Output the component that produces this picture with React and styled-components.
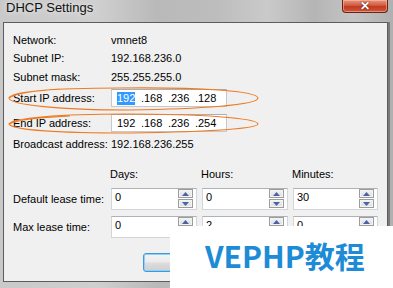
import styled, { createGlobalStyle } from "styled-components";

const GlobalStyle = createGlobalStyle`
  body {
    margin: 0;
    background: #ffffff;
  }
`;

const font = `"Liberation Sans", Arial, sans-serif`;

const Window = styled.div`
  position: relative;
  width: 393px;
  height: 288px;
  overflow: hidden;
  display: flex;
  flex-direction: column;
  font-family: ${font};
  background: linear-gradient(
    90deg,
    #c9c9c9 0%,
    #cfcfcf 25%,
    #b9b9b9 40%,
    #bdbdbd 55%,
    #cacaca 68%,
    #b5b5b5 80%,
    #c4c4c4 90%,
    #b0b0b0 100%
  );
`;

const TitleBar = styled.div`
  height: 22px;
  flex: none;
  display: flex;
  justify-content: space-between;
  align-items: flex-start;
  padding-left: 6px;
`;

const Title = styled.span`
  font-size: 13px;
  line-height: 16px;
  color: #111;
  text-shadow: 0 0 6px rgba(255, 255, 255, 0.9);
`;

const CloseButton = styled.div`
  width: 46px;
  height: 13px;
  margin-right: 5px;
  box-sizing: border-box;
  border: 1px solid #6b2316;
  border-top: none;
  border-radius: 0 0 4px 4px;
  background: linear-gradient(180deg, #e89880 0%, #d4593f 45%, #c03a20 55%, #cf5a3c 100%);
  box-shadow: inset 0 0 0 1px rgba(255, 200, 180, 0.5);
  display: flex;
  justify-content: center;
  align-items: flex-end;
  color: #fff;
  font-size: 12px;
  font-weight: bold;
  line-height: 11px;
  text-shadow: 0 0 2px #3a0a00;
`;

const Client = styled.div`
  flex: 1;
  margin: 0 5px 6px 3px;
  background: #f0f0f0;
  border: 1px solid #5d5d5d;
  box-shadow: 2px 0 0 #7a7a7a;
  padding: 8px 0 0 9px;
  display: flex;
  flex-direction: column;
  font-size: 11px;
  color: #000;
`;

const InfoRow = styled.div`
  display: grid;
  grid-template-columns: 98px 1fr;
  align-items: center;
  height: ${({ $h }) => $h}px;
  margin-top: ${({ $gap }) => $gap || 0}px;
`;

const IpBox = styled.div`
  width: 116px;
  height: 18px;
  box-sizing: border-box;
  border: 1px solid #c5c8cd;
  border-top-color: #a9adb4;
  background: #fff;
  display: flex;
  align-items: center;
  padding-left: 5px;
`;

const Octet = styled.span`
  display: inline-block;
  width: 18px;
  line-height: 13px;
  text-align: center;
  margin-right: 6px;
  background: ${({ $selected }) => ($selected ? "#3399ff" : "transparent")};
  color: ${({ $selected }) => ($selected ? "#fff" : "#000")};
`;

const Dot = styled.span`
  display: inline-block;
  width: 3px;
`;

const LeaseGrid = styled.div`
  display: grid;
  grid-template-columns: 93px 86px 86px 85px;
  column-gap: 5px;
  row-gap: 6px;
  grid-template-rows: 16px 22px 22px;
  margin-top: 13px;
  align-items: center;
`;

const ColHead = styled.span`
  margin-left: -1px;
`;

const SpinBox = styled.div`
  height: 22px;
  box-sizing: border-box;
  border: 1px solid #d2d5da;
  border-top-color: #aeb2b8;
  background: #fff;
  display: flex;
  justify-content: space-between;
  padding: 0 3px 0 3px;
`;

const SpinValue = styled.span`
  line-height: 14px;
  padding-top: 1px;
`;

const SpinButtons = styled.div`
  display: flex;
  flex-direction: column;
  gap: 1px;
`;

const SpinButton = styled.div`
  width: 15px;
  height: 9px;
  box-sizing: border-box;
  border: 1px solid #9c9c9c;
  box-shadow: inset 0 0 0 1px #f4f4f4;
  background: linear-gradient(180deg, #f3f3f3, #dedede);
  display: flex;
  align-items: center;
  justify-content: center;
`;

const Arrow = ({ down }) => (
  <svg width="7" height="4" viewBox="0 0 7 4">
    <path d={down ? "M0 0 L7 0 L3.5 4 Z" : "M0 4 L7 4 L3.5 0 Z"} fill="#4a63a6" />
  </svg>
);

const Footer = styled.div`
  display: flex;
  margin-top: 15px;
  padding-left: 130px;
`;

const DialogButton = styled.div`
  width: 75px;
  height: 19px;
  box-sizing: border-box;
  border: 1px solid #3c9ae0;
  border-radius: 3px;
  box-shadow: inset 0 0 0 1px #8fd0f5;
  background: linear-gradient(180deg, #f4f4f4 0%, #ebebeb 48%, #dddddd 52%, #cfcfcf 100%);
`;

const Watermark = styled.div`
  position: absolute;
  left: 170px;
  top: 226px;
  right: 0;
  bottom: 0;
  background: #fff;
  padding: 14px 0 0 35px;
  box-sizing: border-box;
  font-family: "Noto Sans CJK SC", "Noto Sans", sans-serif;
  font-weight: bold;
  font-size: 30px;
  line-height: 30px;
  color: #1d8bd6;
`;

const Marks = styled.svg`
  position: absolute;
  left: 0;
  top: 0;
  pointer-events: none;
`;

const Spin = ({ value, showDown = true }) => (
  <SpinBox>
    <SpinValue>{value}</SpinValue>
    <SpinButtons>
      <SpinButton>
        <Arrow />
      </SpinButton>
      {showDown && (
        <SpinButton>
          <Arrow down />
        </SpinButton>
      )}
    </SpinButtons>
  </SpinBox>
);

const Ip = ({ octets, selectFirst }) => (
  <IpBox>
    {octets.map((o, i) => (
      <span key={i}>
        {i > 0 && <Dot>.</Dot>}
        <Octet $selected={selectFirst && i === 0}>{o}</Octet>
      </span>
    ))}
  </IpBox>
);

export default function App() {
  return (
    <Window>
      <GlobalStyle />
      <TitleBar>
        <Title>DHCP Settings</Title>
        <CloseButton>✕</CloseButton>
      </TitleBar>
      <Client>
        <InfoRow $h={18}>
          <span>Network:</span>
          <span>vmnet8</span>
        </InfoRow>
        <InfoRow $h={18}>
          <span>Subnet IP:</span>
          <span>192.168.236.0</span>
        </InfoRow>
        <InfoRow $h={19}>
          <span>Subnet mask:</span>
          <span>255.255.255.0</span>
        </InfoRow>
        <InfoRow $h={24}>
          <span>Start IP address:</span>
          <Ip octets={["192", "168", "236", "128"]} selectFirst />
        </InfoRow>
        <InfoRow $h={24} $gap={1}>
          <span>End IP address:</span>
          <Ip octets={["192", "168", "236", "254"]} />
        </InfoRow>
        <InfoRow $h={18}>
          <span>Broadcast address:</span>
          <span>192.168.236.255</span>
        </InfoRow>

        <LeaseGrid>
          <span />
          <ColHead>Days:</ColHead>
          <ColHead>Hours:</ColHead>
          <ColHead>Minutes:</ColHead>

          <span>Default lease time:</span>
          <Spin value="0" />
          <Spin value="0" />
          <Spin value="30" />

          <span>Max lease time:</span>
          <Spin value="0" />
          <Spin value="2" />
          <Spin value="0" />
        </LeaseGrid>

        <Footer>
          <DialogButton />
        </Footer>
      </Client>

      <Marks width="393" height="288" viewBox="0 0 393 288">
        <path
          d="M 9 98 C 10 92, 50 88, 120 88 C 200 87, 257 91, 258 98 C 258 105, 200 109, 130 110 C 60 110, 10 105, 9 98 C 14 94, 30 91, 60 89"
          fill="none"
          stroke="#f07a22"
          strokeWidth="1.2"
        />
        <path
          d="M 9 124 C 12 118, 60 114, 125 114 C 200 114, 257 118, 258 124 C 257 129, 200 132, 130 133 C 60 133, 12 130, 9 124 C 14 121, 30 118, 70 116"
          fill="none"
          stroke="#f07a22"
          strokeWidth="1.2"
        />
      </Marks>

      <Watermark>VEPHP教程</Watermark>
    </Window>
  );
}
